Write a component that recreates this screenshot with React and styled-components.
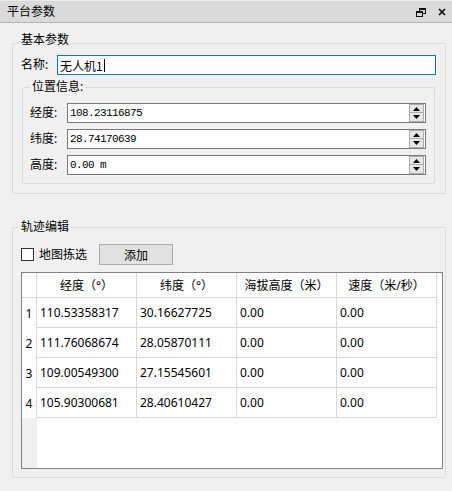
import React from 'react';
import styled, { createGlobalStyle } from 'styled-components';

const Global = createGlobalStyle`
  * { box-sizing: border-box; }
  body {
    margin: 0;
    font-family: "Noto Sans", "Noto Sans CJK SC", sans-serif;
    font-size: 12px;
    color: #000;
  }
`;

const points = [
    ['110.53358317', '30.16627725', '0.00', '0.00'],
    ['111.76068674', '28.05870111', '0.00', '0.00'],
    ['109.00549300', '27.15545601', '0.00', '0.00'],
    ['105.90300681', '28.40610427', '0.00', '0.00'],
];

const heads = ['经度（°）', '纬度（°）', '海拔高度（米）', '速度（米/秒）'];

const position = [
    ['经度:', '108.23116875'],
    ['纬度:', '28.74170639'],
    ['高度:', '0.00 m'],
];

const FloatIcon = () => (
    <svg width="10" height="9" viewBox="0 0 10 9">
        <rect x="3.5" y="0.5" width="6" height="5" fill="none" stroke="#111" />
        <rect x="0.5" y="3.5" width="6" height="5" fill="#dadada" stroke="#111" />
        <line x1="0" y1="4" x2="7" y2="4" stroke="#111" strokeWidth="2" />
        <line x1="3" y1="1" x2="10" y2="1" stroke="#111" strokeWidth="2" />
    </svg>
);

const CloseIcon = () => (
    <svg width="8" height="8" viewBox="0 0 8 8">
        <path d="M1 1 L7 7 M7 1 L1 7" stroke="#111" strokeWidth="1.7" />
    </svg>
);

const Arrow = ({ up }) => (
    <svg width="7" height="4" viewBox="0 0 7 4">
        <path d={up ? 'M0 4 L3.5 0 L7 4 Z' : 'M0 0 L3.5 4 L7 0 Z'} fill="#000" />
    </svg>
);

const SpinBox = ({ value }) => (
    <Spin>
        <SpinText>{value}</SpinText>
        <SpinButtons>
            <SpinButton><Arrow up /></SpinButton>
            <SpinButton><Arrow /></SpinButton>
        </SpinButtons>
    </Spin>
);

export default function App() {
    return (
        <Root>
            <Global />
            <TitleBar>
                <TitleText>平台参数</TitleText>
                <TitleIcons>
                    <FloatIcon />
                    <CloseIcon />
                </TitleIcons>
            </TitleBar>
            <Body>
                <Group $w={434} $pb={9}>
                    <GroupTitle $lift={3} $ml={6}>基本参数</GroupTitle>
                    <NameRow>
                        <Label $w={36}>名称:</Label>
                        <NameInput>无人机1<Caret /></NameInput>
                    </NameRow>
                    <Group $w={413} $pb={8} $mt={12} $ml={9}>
                        <GroupTitle $ml={7}>位置信息:</GroupTitle>
                        <SpinList>
                            {position.map(([label, value]) => (
                                <SpinRow key={label}>
                                    <Label $w={37}>{label}</Label>
                                    <SpinBox value={value} />
                                </SpinRow>
                            ))}
                        </SpinList>
                    </Group>
                </Group>

                <Group $w={434} $pb={8} $mt={33}>
                    <GroupTitle $ml={6}>轨迹编辑</GroupTitle>
                    <Toolbar>
                        <CheckBox />
                        <CheckLabel>地图拣选</CheckLabel>
                        <Button>添加</Button>
                    </Toolbar>
                    <Table>
                        <Row $h={25}>
                            <NumCell $head />
                            {heads.map((h) => (
                                <HeadCell key={h}>{h}</HeadCell>
                            ))}
                        </Row>
                        {points.map((p, i) => (
                            <Row key={i} $h={30}>
                                <NumCell>{i + 1}</NumCell>
                                {p.map((v, j) => (
                                    <Cell key={j}>{v}</Cell>
                                ))}
                            </Row>
                        ))}
                        <Filler>
                            <FillerStub />
                        </Filler>
                    </Table>
                </Group>
            </Body>
        </Root>
    );
}

const Root = styled.div`
    width: 452px;
    height: 491px;
    background: #f0f0f0;
    overflow: hidden;
`;

const TitleBar = styled.div`
    height: 23px;
    display: flex;
    align-items: center;
    padding: 0 6px 0 7px;
    background: #dadada;
    border-top: 1px solid #ececec;
    border-bottom: 1px solid #b4b4b4;
`;

const TitleText = styled.div`
    flex: 1;
    line-height: 16px;
`;

const TitleIcons = styled.div`
    display: flex;
    align-items: center;
    gap: 12px;
    padding-top: 1px;
`;

const Body = styled.div`
    padding: 20px 0 0 12px;
`;

const Group = styled.div`
    width: ${(p) => p.$w}px;
    margin: ${(p) => p.$mt || 0}px 0 0 ${(p) => p.$ml || 0}px;
    padding-bottom: ${(p) => p.$pb}px;
    border: 1px solid #dcdcdc;
    border-radius: 2px;
`;

const GroupTitle = styled.div`
    width: fit-content;
    height: 14px;
    line-height: 14px;
    margin: ${(p) => -8 - (p.$lift || 0)}px 0 0 ${(p) => p.$ml}px;
    padding: 0 2px;
    background: #f0f0f0;
    white-space: nowrap;
`;

const NameRow = styled.div`
    display: flex;
    align-items: center;
    margin-top: 8px;
    padding-left: 8px;
`;

const Label = styled.div`
    width: ${(p) => p.$w}px;
    flex: none;
    line-height: 16px;
`;

const NameInput = styled.div`
    width: 379px;
    height: 20px;
    display: flex;
    align-items: center;
    padding-left: 2px;
    background: #fff;
    border: 1px solid #0078d7;
    font-family: "Noto Sans CJK SC", sans-serif;
`;

const Caret = styled.span`
    width: 1px;
    height: 13px;
    margin-left: 1px;
    background: #000;
`;

const SpinList = styled.div`
    display: flex;
    flex-direction: column;
    gap: 6px;
    margin-top: 9px;
`;

const SpinRow = styled.div`
    display: flex;
    align-items: center;
    padding-left: 7px;
`;

const Spin = styled.div`
    width: 359px;
    height: 20px;
    display: flex;
    align-items: center;
    padding: 0 1px 0 2px;
    background: #fff;
    border: 1px solid #7a7a7a;
`;

const SpinText = styled.div`
    flex: 1;
    font-family: "Liberation Mono", monospace;
    font-size: 11px;
    letter-spacing: -0.6px;
    line-height: 14px;
`;

const SpinButtons = styled.div`
    display: flex;
    flex-direction: column;
    width: 15px;
`;

const SpinButton = styled.div`
    height: 9px;
    display: flex;
    align-items: center;
    justify-content: center;
    background: #e6e6e6;
    border: 1px solid #adadad;
    & + & {
        border-top: none;
    }
`;

const Toolbar = styled.div`
    display: flex;
    align-items: center;
    margin-top: 10px;
    padding-left: 8px;
`;

const CheckBox = styled.div`
    width: 13px;
    height: 13px;
    background: #fff;
    border: 1px solid #333;
`;

const CheckLabel = styled.div`
    margin-left: 5px;
    line-height: 16px;
`;

const Button = styled.div`
    width: 74px;
    height: 21px;
    margin-left: 12px;
    display: flex;
    align-items: center;
    justify-content: center;
    background: #e1e1e1;
    border: 1px solid #adadad;
`;

const Table = styled.div`
    width: 422px;
    height: 197px;
    margin: 7px 0 0 8px;
    display: flex;
    flex-direction: column;
    background: #fff;
    border: 1px solid #828282;
`;

const Row = styled.div`
    display: grid;
    grid-template-columns: 15px repeat(4, 100px);
    height: ${(p) => p.$h}px;
    flex: none;
`;

const NumCell = styled.div`
    display: flex;
    align-items: center;
    justify-content: center;
    border-right: 1px solid #d8d8d8;
    border-bottom: ${(p) => (p.$head ? '1px solid #d8d8d8' : 'none')};
`;

const HeadCell = styled.div`
    display: flex;
    align-items: center;
    justify-content: center;
    border-right: 1px solid #d8d8d8;
    border-bottom: 1px solid #d8d8d8;
    white-space: nowrap;
`;

const Cell = styled.div`
    display: flex;
    align-items: center;
    padding-left: 3px;
    border-right: 1px solid #d8d8d8;
    border-bottom: 1px solid #d8d8d8;
`;

const Filler = styled.div`
    flex: 1;
    display: flex;
`;

const FillerStub = styled.div`
    width: 15px;
    background: #f0f0f0;
`;
